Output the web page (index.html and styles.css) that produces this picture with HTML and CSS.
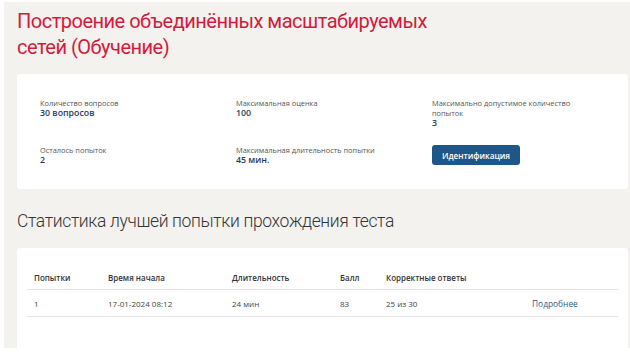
FILE: index.html
```html
<!DOCTYPE html>
<html lang="ru">
<head>
    <meta charset="UTF-8">
    <meta name="viewport" content="width=device-width, initial-scale=1.0">
    <title>Построение объединённых масштабируемых сетей</title>
    <link rel="stylesheet" href="styles.css">
</head>
<body>

    <div class="page">
        <h1 class="course-title">Построение объединённых масштабируемых<br>сетей (Обучение)</h1>

        <div class="card info-card">
            <div class="info-item">
                <span class="info-label">Количество вопросов</span>
                <span class="info-value">30 вопросов</span>
            </div>
            <div class="info-item">
                <span class="info-label">Максимальная оценка</span>
                <span class="info-value">100</span>
            </div>
            <div class="info-item">
                <span class="info-label">Максимально допустимое количество попыток</span>
                <span class="info-value">3</span>
            </div>
            <div class="info-item">
                <span class="info-label">Осталось попыток</span>
                <span class="info-value">2</span>
            </div>
            <div class="info-item">
                <span class="info-label">Максимальная длительность попытки</span>
                <span class="info-value">45 мин.</span>
            </div>
            <div class="info-item">
                <button class="btn-primary">Идентификация</button>
            </div>
        </div>

        <h2 class="section-title">Статистика лучшей попытки прохождения теста</h2>

        <div class="card results-card">
            <table class="results">
                <thead>
                    <tr>
                        <th class="col-try">Попытки</th>
                        <th class="col-start">Время начала</th>
                        <th class="col-dur">Длительность</th>
                        <th class="col-score">Балл</th>
                        <th class="col-correct">Корректные ответы</th>
                        <th></th>
                    </tr>
                </thead>
                <tbody>
                    <tr>
                        <td>1</td>
                        <td>17-01-2024 08:12</td>
                        <td>24 мин</td>
                        <td>83</td>
                        <td>25 из 30</td>
                        <td><a href="#" class="details-link">Подробнее</a></td>
                    </tr>
                </tbody>
            </table>
        </div>
    </div>

</body>
</html>
```

FILE: styles.css
```css
body {
    margin: 0;
    padding: 2px 0 0 4px;
    background: #ffffff;
    font-family: "Open Sans", "Noto Sans", sans-serif;
}
.page {
    width: 611px;
    height: 346px;
    overflow: hidden;
    background-color: #f3f2ef;
    padding: 0 4px 0 13px;
}
.course-title {
    margin: 0;
    padding-top: 6px;
    font-family: Roboto, sans-serif;
    font-weight: 400;
    font-size: 20px;
    letter-spacing: -0.5px;
    line-height: 26px;
    color: #d31a3c;
}
.card {
    background: white;
    border-radius: 3px;
}
.info-card {
    margin-top: 14px;
    padding: 24px 20px 23px 23px;
    display: grid;
    grid-template-columns: 196px 196px 150px;
    row-gap: 16px;
}
.info-item {
    display: flex;
    flex-direction: column;
}
.info-label {
    font-size: 7.4px;
    line-height: 10px;
    color: #555;
}
.info-value {
    font-size: 8.8px;
    line-height: 11px;
    font-weight: 600;
    color: #1e3b62;
}
.btn-primary {
    align-self: flex-start;
    width: 88px;
    height: 20px;
    padding: 0;
    border: none;
    border-radius: 3px;
    background-color: #1f5688;
    color: white;
    font-family: "Open Sans", sans-serif;
    font-size: 8.2px;
    font-weight: 600;
    cursor: pointer;
}
.section-title {
    margin: 20px 0 0;
    font-family: Roboto, sans-serif;
    font-weight: 300;
    font-size: 17.5px;
    letter-spacing: -0.35px;
    line-height: 24px;
    color: #333;
}
.results-card {
    margin-top: 15px;
    padding: 18px 10px 40px 10px;
}
.results {
    width: 100%;
    border-collapse: collapse;
    font-size: 8px;
    line-height: 11px;
    color: #444;
}
.results th {
    text-align: left;
    font-weight: 600;
    color: #333;
    padding: 6px 0 6px 7px;
    border-bottom: 1px solid #e4e4e4;
}
.results td {
    padding: 8px 0 7px 7px;
    border-bottom: 1px solid #e4e4e4;
}
.col-try { width: 67px; }
.col-start { width: 117px; }
.col-dur { width: 101px; }
.col-score { width: 39px; }
.col-correct { width: 139px; }
.details-link {
    color: #2a5c8e;
    font-size: 8.4px;
    text-decoration: none;
}
```
